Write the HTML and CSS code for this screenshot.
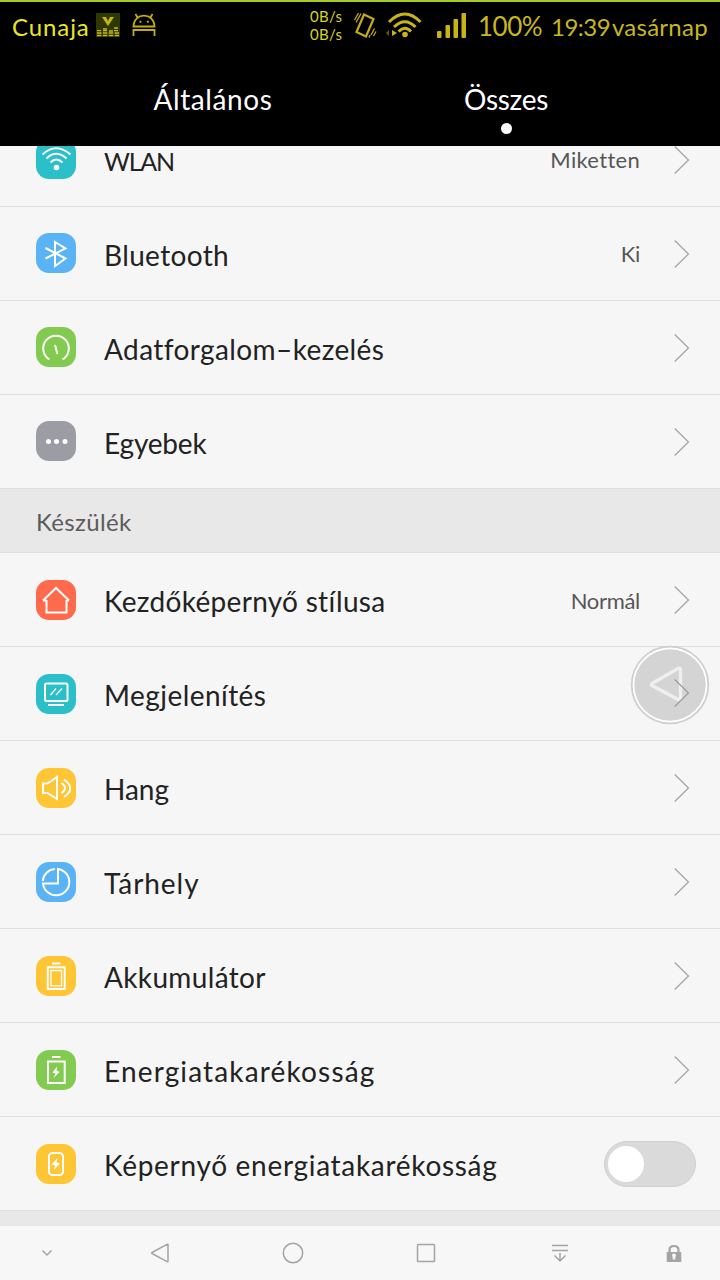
FILE: index.html
```html
<!DOCTYPE html>
<html lang="hu">
<head>
<meta charset="utf-8">
<title>Beállítások</title>
<link rel="stylesheet" href="styles.css">
</head>
<body>
<div class="phone">
  <header class="top">
    <div class="status">
      <span class="carrier">Cunaja</span>
      <svg class="s-eq" width="24" height="24" viewBox="0 0 24 24"><rect width="24" height="24" fill="#2f3800"/><path d="M6 4h4l2 4 2-4h4l-6 9z" fill="#c4b714"/><path d="M1 22.5h22M1 20h22M1 17.6h4M7 17.6h4M18 17.6h4M7 16h4M13 18h4M18 15h4" stroke="#c4b714" stroke-width="1.3" stroke-dasharray="4.4 1.5"/></svg>
      <svg class="s-droid" width="24" height="24" viewBox="0 0 24 24" fill="none" stroke="#c2ad14" stroke-width="1.8"><path d="M1.500 13.500C2 -1 22 -1 22.500 13.500zM5.500 4.500L3.500 1M18.500 4.500L20.500 1M1.500 23V17H22.500V23"/><path d="M7.500 8.800h1.800M15 8.800h1.800" stroke-width="2"/></svg>
      <span class="speed"><span>0B/s</span><span>0B/s</span></span>
      <svg class="s-vib" width="24" height="27" viewBox="0 0 24 27" fill="none" stroke="#c2ad14"><path d="M11 2.500L20.500 7 13 24.500 3.500 20z" stroke-width="2.200"/><path d="M5.500 1L1.500 8M8 1.500L3 10.500M18 23L21.500 16.500M16 25.500L17 23M20.500 24L23 19.500" stroke-width="1.300"/></svg>
      <svg class="s-wifi" width="36" height="26" viewBox="0 0 36 26" fill="none" stroke="#c8b414" stroke-width="3"><path d="M3 10Q19 -6 34.500 10M8 15Q19 4.500 29.500 15M12.500 19.500Q19 13 25 19.500"/><circle cx="19" cy="22.500" r="2.800" fill="#c8b414" stroke="none"/><path d="M3 18v6l-3-3z" fill="#655b0a" stroke="none"/><path d="M6 18v6l5-3z" fill="#c8b414" stroke="none"/></svg>
      <svg class="s-signal" width="29" height="25" viewBox="0 0 29 25" fill="#c8b414"><rect x="0" y="18" width="4.500" height="7" rx="1"/><rect x="8.500" y="12" width="4.500" height="13" rx="1"/><rect x="16.500" y="6" width="4.500" height="19" rx="1"/><rect x="24.500" y="0" width="4.500" height="25" rx="1"/></svg>
      <span class="battery">100%</span>
      <span class="clock">19:39</span>
      <span class="day">vasárnap</span>
    </div>
    <nav class="tabs">
      <span class="tab tab-general">Általános</span>
      <span class="tab tab-all">Összes</span>
    </nav>
  </header>

  <main class="list">
    <section class="group network">
      <div class="row"><svg class="icon teal" viewBox="0 0 40 40"><path d="M6.500 15.500Q20 3 34.500 15.500M10.500 19.500Q20 10 30.500 19.500M14.500 23.500Q20 17.500 26.500 23.500"/><circle cx="20.500" cy="28.500" r="2.800" class="solid"/></svg><span class="label wlan">WLAN</span><span class="value miketten">Miketten</span><svg class="chev" viewBox="0 0 16 30"><path d="M.7 1.500L14.500 15 .7 28.500"/></svg></div>
      <div class="row"><svg class="icon blue" viewBox="0 0 40 40"><path d="M9.500 15L29.500 25.500 19 33V9L29.500 15.500 9.500 25.500"/></svg><span class="label bt">Bluetooth</span><span class="value ki">Ki</span><svg class="chev" viewBox="0 0 16 30"><path d="M.7 1.500L14.500 15 .7 28.500"/></svg></div>
      <div class="row"><svg class="icon green" viewBox="0 0 40 40"><path d="M13.500 32.500A12.800 12.800 0 1 1 26.500 32.500M19 18L21.500 27"/></svg><span class="label data">Adatforgalom–kezelés</span><svg class="chev" viewBox="0 0 16 30"><path d="M.7 1.500L14.500 15 .7 28.500"/></svg></div>
      <div class="row"><svg class="icon gray" viewBox="0 0 40 40"><g class="solid"><circle cx="12.500" cy="20.500" r="2.500"/><circle cx="20.500" cy="20.500" r="2.500"/><circle cx="29" cy="20.500" r="2.500"/></g></svg><span class="label more">Egyebek</span><svg class="chev" viewBox="0 0 16 30"><path d="M.7 1.500L14.500 15 .7 28.500"/></svg></div>
    </section>
    <h2 class="heading">Készülék</h2>
    <section class="group device">
      <div class="row"><svg class="icon red" viewBox="0 0 40 40"><path d="M10.500 20V32.500H30.500V20M7 20.500L20 8 33 20.500M7 20.500H10.500M30.500 20.500H33"/></svg><span class="label home">Kezdőképernyő stílusa</span><span class="value normal">Normál</span><svg class="chev" viewBox="0 0 16 30"><path d="M.7 1.500L14.500 15 .7 28.500"/></svg></div>
      <div class="row"><svg class="icon teal" viewBox="0 0 40 40"><rect x="9" y="9.500" width="22.500" height="17.500" rx="1.500"/><path d="M12 31H28"/><path class="thin" d="M14.500 21L20 14.500M20 21L26 14.500"/></svg><span class="label display">Megjelenítés</span><svg class="chev" viewBox="0 0 16 30"><path d="M.7 1.500L14.500 15 .7 28.500"/></svg></div>
      <div class="row"><svg class="icon yellow" viewBox="0 0 40 40"><path d="M7 15.500H11.500L21 9V31L11.500 25H7zM25.500 15Q32.500 20 25.500 25M28 11.500Q40.500 20.500 28 29"/></svg><span class="label sound">Hang</span><svg class="chev" viewBox="0 0 16 30"><path d="M.7 1.500L14.500 15 .7 28.500"/></svg></div>
      <div class="row"><svg class="icon blue" viewBox="0 0 40 40"><path d="M6.800 19A13 13 0 0 1 18.800 7.100M22 7A13.200 13.200 0 1 1 7 21.500H22z"/></svg><span class="label storage">Tárhely</span><svg class="chev" viewBox="0 0 16 30"><path d="M.7 1.500L14.500 15 .7 28.500"/></svg></div>
      <div class="row"><svg class="icon yellow" viewBox="0 0 40 40"><path d="M16 7.500H24.500M11.800 11.300H28.700V33H11.800z"/><path class="thin" d="M15 14.500H25.500V29.800H15z"/></svg><span class="label accu">Akkumulátor</span><svg class="chev" viewBox="0 0 16 30"><path d="M.7 1.500L14.500 15 .7 28.500"/></svg></div>
      <div class="row"><svg class="icon green" viewBox="0 0 40 40"><path d="M16 7H24.500M12 11.500H28.700V33H12z"/><path class="solid" d="M21 16.500L16.500 22.500 19.500 23.500 17.500 28 23.500 22 20.500 20.500z"/></svg><span class="label saving">Energiatakarékosság</span><svg class="chev" viewBox="0 0 16 30"><path d="M.7 1.500L14.500 15 .7 28.500"/></svg></div>
      <div class="row"><svg class="icon yellow" viewBox="0 0 40 40"><rect x="13" y="9" width="14" height="22" rx="3.500"/><path class="solid" d="M21.500 14L15.500 20.500 19 21.500 17.500 26.500 24 19.500 20.500 18.500z"/></svg><span class="label screen">Képernyő energiatakarékosság</span><span class="toggle"><span class="knob"></span></span></div>
    </section>
  </main>

  <footer class="nav">
    <svg class="n-hide" width="12" height="8" viewBox="0 0 12 8"><path d="M1.500 1.500L6 6 10.500 1.500"/></svg>
    <svg class="n-back" width="20" height="22" viewBox="0 0 20 22"><path d="M18 2.500V19.500Q18 20 17.500 19.800L2 11.500Q1.300 11 2 10.500L17.500 2.200Q18 2 18 2.500z"/></svg>
    <svg class="n-home" width="22" height="22" viewBox="0 0 22 22"><circle cx="11" cy="11" r="9.700"/></svg>
    <svg class="n-recent" width="20" height="20" viewBox="0 0 20 20"><rect x="1.500" y="1.500" width="17" height="17" rx=".8"/></svg>
    <svg class="n-pull" width="18" height="19" viewBox="0 0 18 19"><path d="M1 1.500H17M1 6.500H17M9 9V17M3.500 11.500L9 17 14.500 11.500"/></svg>
    <svg class="n-lock" width="16" height="19" viewBox="0 0 16 19"><path d="M3.500 9V6Q3.500 2 8 2T12.500 6V9" stroke-width="2.200"/><path fill="#a4a4a4" stroke="none" d="M.7 8H15.300V18H.7z"/><path fill="#f6f6f6" stroke="none" d="M8 9.500a2 2 0 0 1 1.300 3.500V15.500H6.700V13A2 2 0 0 1 8 9.500z"/></svg>
  </footer>

  <svg class="float" width="80" height="80" viewBox="0 0 80 80"><circle cx="40" cy="40" r="38.300" fill="#fff" stroke="#cfcfcf" stroke-width="1.800"/><circle cx="40" cy="40" r="35.700" fill="#d4d4d4"/><path d="M50.500 25V53.500Q50.500 56 48 54.500L22 40.500Q20.500 39.500 22 38.500L48 23.500Q50.500 22.500 50.500 25z" fill="none" stroke="#efefef" stroke-width="3.300"/><path d="M44.700 34.500L58.500 48 44.700 61.500" fill="none" stroke="#999" stroke-width="1.100"/></svg>
</div>
</body>
</html>
```
FILE: styles.css
```css
* { box-sizing: border-box; }
body { margin: 0; background: #f6f6f6; }
.phone {
  position: relative;
  width: 720px;
  height: 1280px;
  overflow: hidden;
  display: flex;
  flex-direction: column;
  font-family: Lato, "Noto Sans", sans-serif;
  font-variant-ligatures: none;
  color: #222;
}
.phone svg { flex: none; display: block; }

/* Status bar and tabs */
.top { height: 146px; flex: none; background: #000; border-top: 2px solid #a5cb27; }
.status { height: 48px; display: flex; align-items: center; padding-left: 12px; color: #c8b81c; font-size: 26px; white-space: nowrap; }
.carrier { width: 84px; color: #e9e824; font-size: 24px; letter-spacing: .9px; }
.s-droid { margin-left: 12px; }
.s-eq, .s-droid { margin-top: -3px; }
.speed { display: flex; flex-direction: column; width: 43px; margin-left: 154px; margin-top: -2px; font-size: 15px; line-height: 18px; letter-spacing: .3px; color: #d9d323; }
.s-vib, .s-wifi, .s-signal { margin-top: -2px; }
.s-wifi { margin-left: 9px; }
.s-signal { margin-left: 15px; }
.battery { width: 73px; margin-left: 12px; letter-spacing: -.5px; }
.clock { width: 61px; font-size: 24px; letter-spacing: -.5px; }
.day { font-size: 24px; letter-spacing: .25px; }
.tabs { height: 96px; display: grid; grid-template-columns: 426px 160px; color: #fff; font-size: 28px; line-height: 34px; padding-top: 32px; }
.tab { justify-self: center; }
.tab-general { letter-spacing: .6px; }
.tab-all { letter-spacing: -.3px; }
.tab-all::after { content: ""; display: block; width: 11px; height: 11px; margin: 7px auto 0; border-radius: 50%; background: #fff; }

/* Settings list */
.list { flex: none; height: 1080px; overflow: hidden; background: #e8e8e8; }
.network { margin-top: -33px; }
.row { height: 94px; display: flex; align-items: center; padding-left: 36px; padding-right: 30px; border-bottom: 1px solid #dedede; background: #f6f6f6; }
.network .row { padding-bottom: 1px; }
.network .chev { margin-top: 2px; }
.device .row { padding-top: 1px; }
.icon { width: 40px; height: 40px; border-radius: 13px; fill: none; stroke: #fff; stroke-width: 2; }
.icon .solid { fill: #fff; stroke: none; }
.icon .thin { stroke-width: 1.300; }
.teal { background: #2bc0c9; }
.blue { background: #5ab3f4; }
.green { background: #82ca50; }
.gray { background: #9c9ca5; }
.red { background: #ff6a4d; }
.yellow { background: #fec534; }
.label { margin-left: 28px; margin-top: 2px; flex: 1; font-size: 28px; line-height: 28px; white-space: nowrap; }
.network .label { margin-top: 4px; }
.label.wlan { font-size: 25px; line-height: 25px; letter-spacing: -1.200px; }
.bt, .accu { letter-spacing: .35px; }
.data { letter-spacing: .4px; }
.more { letter-spacing: -.2px; }
.home { letter-spacing: .3px; }
.display { letter-spacing: .45px; }
.storage { letter-spacing: .95px; }
.saving { letter-spacing: 1.150px; }
.screen { letter-spacing: .7px; }
.value { margin-top: 1px; margin-right: 34px; font-size: 22px; color: #565656; white-space: nowrap; }
.miketten { letter-spacing: .3px; }
.ki, .normal { letter-spacing: -.3px; }
.chev { width: 16px; height: 30px; fill: none; stroke: #a2a2a2; stroke-width: 1.200; }
.heading { margin: 0; height: 64px; padding-left: 36px; border-bottom: 1px solid #dedede; font-size: 24px; font-weight: 400; line-height: 65px; letter-spacing: .35px; color: #5b5b5b; }
.toggle { width: 92px; height: 46px; margin-right: -6px; padding: 4px 3px; border: 1px solid #cfcfcf; border-radius: 23px; background: #dadada; }
.knob { display: block; width: 36px; height: 36px; border-radius: 50%; background: #fff; }

/* Navigation bar */
.nav { flex: none; height: 54px; display: flex; align-items: center; padding-left: 41px; background: #f7f7f7; fill: none; stroke: #a4a4a4; stroke-width: 1.500; }
.n-back { margin-left: 97px; }
.n-home { margin-left: 112px; }
.n-recent { margin-left: 112px; }
.n-pull { margin-left: 115px; }
.n-lock { margin-left: 97px; }

/* Floating back button */
.float { position: absolute; left: 630px; top: 645px; }
```
